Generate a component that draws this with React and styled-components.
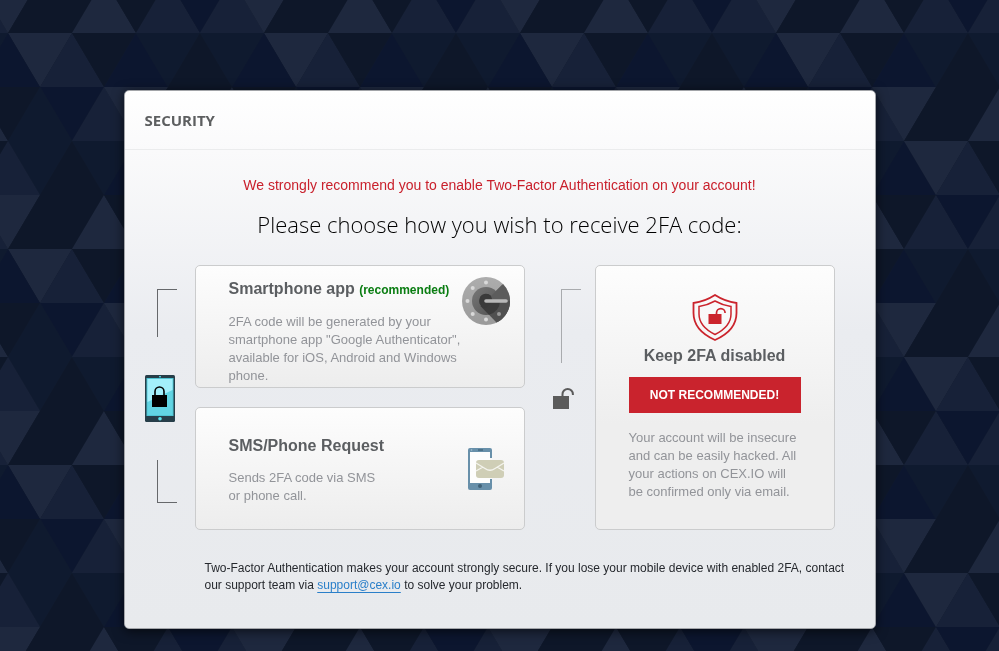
import React from "react";
import styled, { createGlobalStyle } from "styled-components";

const GlobalStyle = createGlobalStyle`
  * {
    box-sizing: border-box;
  }
  body {
    margin: 0;
    background: #0e182b;
    color: #26292e;
    font-family: "Liberation Sans", Arial, sans-serif;
  }
  h1, h2, p {
    margin: 0;
  }
`;

const light = "#1e283e";
const mid = "#172138";
const dark = "#0e1729";
const navy = "#0c162f";
const deep = "#0f1a2f";

// each row lists its triangles from left to right: down, up, down, up...
const triangleRows = [
  { offset: 0, colors: [light, mid, dark, navy, deep, dark, deep, navy] },
  { offset: 32, colors: [navy, mid, light, dark, dark, light, dark, deep] },
  { offset: 0, colors: [deep, dark, deep, navy, light, mid, dark, mid] },
  { offset: 32, colors: [dark, light, dark, mid, navy, mid, light, dark] },
];

const triangles = triangleRows.flatMap(({ offset, colors }, row) =>
  colors.flatMap((fill, i) => {
    const x = offset + i * 32;
    const top = row * 54;
    const bottom = top + 54;
    return [x, x - 256].map((left) => ({
      fill,
      points:
        i % 2 === 0
          ? `${left},${top} ${left + 64},${top} ${left + 32},${bottom}`
          : `${left},${bottom} ${left + 64},${bottom} ${left + 32},${top}`,
    }));
  })
);

const Backdrop = () => (
  <BackdropSvg aria-hidden="true">
    <defs>
      <pattern
        id="triangles"
        x="8"
        y="33"
        width="256"
        height="216"
        patternUnits="userSpaceOnUse"
      >
        <rect width="256" height="216" fill={dark} />
        {triangles.map((t, i) => (
          <polygon key={i} points={t.points} fill={t.fill} />
        ))}
      </pattern>
    </defs>
    <rect width="100%" height="100%" fill="url(#triangles)" />
  </BackdropSvg>
);

const AuthenticatorIcon = () => (
  <svg width="48" height="48" viewBox="0 0 48 48" aria-hidden="true">
    <defs>
      <linearGradient id="dial" x1="0" y1="0" x2="0" y2="1">
        <stop offset="0" stopColor="#adadad" />
        <stop offset="1" stopColor="#9a9a9a" />
      </linearGradient>
      <linearGradient id="ring" x1="0" y1="0" x2="1" y2="1">
        <stop offset="0" stopColor="#787878" />
        <stop offset="1" stopColor="#505050" />
      </linearGradient>
    </defs>
    <circle cx="24" cy="24" r="24" fill="url(#dial)" />
    <path d="M24 24 41 7A24 24 0 0 1 34.5 45.6Z" fill="#5c5c5c" />
    <circle cx="24" cy="24" r="14" fill="url(#ring)" />
    <path d="M24 24H48A24 24 0 0 1 34.5 45.6L18.5 29Z" fill="#505050" />
    <path d="M24 24H38A14 14 0 0 1 27 37.7L18.5 29Z" fill="#3c3c3c" />
    <path d="M29 19A7 7 0 1 0 24 31L31 24H24Z" fill="#3a3a3a" />
    <path d="M24 24 29 19 34 14 40 8 42 24Z" fill="#5c5c5c" />
    <path d="M29 19A7 7 0 0 0 18 20L24 25 31 25Z" fill="#3a3a3a" />
    <g fill="#d9d9d9">
      <circle cx="24" cy="5.5" r="2" />
      <circle cx="10.7" cy="11" r="2" />
      <circle cx="5.5" cy="24" r="2" />
      <circle cx="10.7" cy="37" r="2" />
      <circle cx="24" cy="42.5" r="2" />
      <circle cx="37" cy="37" r="2" fill="#999" />
    </g>
    <path d="M24 24H44" stroke="#b9b9b9" strokeWidth="3.6" strokeLinecap="round" />
  </svg>
);

const SmsIcon = () => (
  <svg width="36" height="42" viewBox="0 0 36 42" aria-hidden="true">
    <rect width="24" height="42" rx="2" fill="#6890aa" />
    <rect x="2" y="4" width="20" height="31" fill="#fdfdfd" />
    <rect x="10" y="1" width="5" height="2" fill="#4c728a" />
    <circle cx="3.5" cy="2" r="0.8" fill="#a9c5d6" />
    <circle cx="12" cy="38" r="2" fill="#3f6177" />
    <rect x="22" y="10" width="2" height="21" fill="#f8f8f8" />
    <rect x="8" y="12" width="28" height="18" rx="3" fill="#cfceb6" />
    <path
      d="M8 15 17 20.5Q22 24 27 20.5L36 15M8 23 15 19M36 23 29 19"
      fill="none"
      stroke="#f4f4ee"
      strokeWidth="1.3"
    />
  </svg>
);

const LockedPhoneIcon = () => (
  <svg width="30" height="47" viewBox="0 0 30 47" aria-hidden="true">
    <rect width="30" height="47" rx="1.5" fill="#263e49" />
    <rect x="1.5" y="3" width="27" height="38" fill="#4fc4d3" />
    <rect x="2.5" y="4" width="25" height="36" fill="#62d4e3" />
    <path d="M2.5 4H27.5V15L2.5 27Z" fill="#a3effb" />
    <rect x="14" y="1" width="2" height="1.4" fill="#4fc4d3" />
    <circle cx="15" cy="43.8" r="1.8" fill="#5be3ee" />
    <path
      d="M10 21V16.500a4.500 4.500 0 0 1 9 0V21"
      fill="none"
      stroke="#000"
      strokeWidth="1.6"
    />
    <rect x="7" y="20" width="15" height="12" fill="#000" />
  </svg>
);

const OpenLockIcon = () => (
  <svg width="21" height="21" viewBox="0 0 21 21" aria-hidden="true">
    <rect y="8" width="16" height="13" fill="#5b5b5b" />
    <path
      d="M9.5 9V6.2a5.200 5.200 0 0 1 10.400 0V7"
      fill="none"
      stroke="#5b5b5b"
      strokeWidth="2"
    />
  </svg>
);

const ShieldIcon = () => (
  <svg width="46" height="47" viewBox="0 0 46 47" aria-hidden="true">
    <g fill="none" stroke="#cb242d">
      <path
        d="M23 1Q33 7.500 44.500 9V19C44.500 31 36.500 40 23 46 9.500 40 1.500 31 1.500 19V9Q13 7.500 23 1Z"
        strokeWidth="1.8"
      />
      <path
        d="M23 7Q31 11.500 39 12.500V20C39 29 33 35.500 23 40.500 13 35.500 7 29 7 20V12.500Q15 11.500 23 7Z"
        strokeWidth="1.5"
      />
      <path d="M24.500 21V19a4.300 4.300 0 0 1 8.600 0" strokeWidth="1.7" />
    </g>
    <rect x="16.500" y="20" width="13" height="10" fill="#cb242d" />
  </svg>
);

const App = () => {
  return (
    <>
      <GlobalStyle />
      <Backdrop />
      <Page>
        <Panel>
          <PanelHeader>
            <PanelTitle>SECURITY</PanelTitle>
          </PanelHeader>
          <Warning>
            We strongly recommend you to enable Two-Factor Authentication on
            your account!
          </Warning>
          <Question>Please choose how you wish to receive 2FA code:</Question>
          <Choices>
            <Connector>
              <Bracket $height={48} />
              <LockedPhoneIcon />
              <Bracket $height={43} $bottom />
            </Connector>
            <Options>
              <Option type="button" $top={11}>
                <OptionText>
                  <OptionTitle>
                    Smartphone app <Hint>(recommended)</Hint>
                  </OptionTitle>
                  <OptionNote>
                    2FA code will be generated by your smartphone app "Google
                    Authenticator", available for iOS, Android and Windows
                    phone.
                  </OptionNote>
                </OptionText>
                <IconSlot>
                  <AuthenticatorIcon />
                </IconSlot>
              </Option>
              <Option type="button" $top={26}>
                <OptionText>
                  <OptionTitle>SMS/Phone Request</OptionTitle>
                  <OptionNote $narrow>
                    Sends 2FA code via SMS or phone call.
                  </OptionNote>
                </OptionText>
                <IconSlot $centered>
                  <SmsIcon />
                </IconSlot>
              </Option>
            </Options>
            <OpenConnector>
              <Bracket $height={74} $light />
              <OpenLockIcon />
            </OpenConnector>
            <DisabledCard>
              <ShieldIcon />
              <OptionTitle>Keep 2FA disabled</OptionTitle>
              <DangerButton type="button">NOT RECOMMENDED!</DangerButton>
              <OptionNote>
                Your account will be insecure and can be easily hacked. All your
                actions on CEX.IO will be confirmed only via email.
              </OptionNote>
            </DisabledCard>
          </Choices>
          <Footnote>
            Two-Factor Authentication makes your account strongly secure. If you
            lose your mobile device with enabled 2FA, contact our support team
            via <a href="mailto:support@cex.io">support@cex.io</a> to solve your
            problem.
          </Footnote>
        </Panel>
      </Page>
    </>
  );
};

const BackdropSvg = styled.svg`
  position: fixed;
  inset: 0;
  z-index: -1;
  width: 100%;
  height: 100%;
`;

const Page = styled.main`
  padding: 90px 16px 22px;
`;

const Panel = styled.section`
  max-width: 752px;
  margin: 0 auto;
  padding-bottom: 34px;
  border: 1px solid #a3a5a9;
  border-radius: 5px;
  background: linear-gradient(#fff 0, #fafafb 60px, #eaecf0 240px, #e8eaed 100%);
  box-shadow: 0 2px 12px rgba(0, 0, 0, 0.65);
`;

const PanelHeader = styled.header`
  padding: 17px 20px;
  border-bottom: 1px solid #ebeced;
`;

const PanelTitle = styled.h1`
  color: #5d5f60;
  font-family: "Open Sans", sans-serif;
  font-size: 15px;
  font-weight: 700;
  line-height: 24px;
`;

const Warning = styled.p`
  margin-top: 25px;
  color: #c9202c;
  font-size: 14px;
  line-height: 20px;
  text-align: center;
`;

const Question = styled.h2`
  margin-top: 13px;
  color: #000;
  font-family: "Open Sans", sans-serif;
  font-size: 22px;
  font-weight: 300;
  line-height: 32px;
  text-align: center;
`;

const Choices = styled.div`
  display: grid;
  grid-template-columns: 50px minmax(0, 330fr) 70px minmax(0, 240fr);
  margin: 25px 40px 0 20px;
`;

const Connector = styled.div`
  display: flex;
  flex-direction: column;
  justify-content: space-between;
  padding: 24px 0 27px;
`;

const OpenConnector = styled.div`
  display: flex;
  flex-direction: column;
  gap: 25px;
  padding: 24px 0 0 28px;
`;

const Bracket = styled.span`
  width: 20px;
  height: ${({ $height }) => $height}px;
  margin-left: ${({ $light }) => ($light ? 8 : 12)}px;
  border: 0 solid ${({ $light }) => ($light ? "#a9abae" : "#66686b")};
  border-left-width: 1px;
  ${({ $bottom }) => ($bottom ? "border-bottom-width" : "border-top-width")}: 1px;
`;

const Options = styled.div`
  display: grid;
  grid-template-rows: 1fr 1fr;
  gap: 19px;
`;

const Option = styled.button`
  display: flex;
  align-items: flex-start;
  min-height: 123px;
  padding: ${({ $top }) => $top}px 14px 0 33px;
  border: 1px solid #cbcccd;
  border-radius: 5px;
  background: linear-gradient(#fdfdfd, #ededed);
  font-family: inherit;
  text-align: left;
  cursor: pointer;
`;

const OptionText = styled.span`
  flex: 1;
  margin-right: -14px;
`;

const OptionTitle = styled.strong`
  display: block;
  color: #5b5e61;
  font-size: 16px;
  line-height: 24px;
`;

const Hint = styled.span`
  color: #0a7d12;
  font-size: 12px;
`;

const OptionNote = styled.span`
  display: block;
  max-width: ${({ $narrow }) => ($narrow ? "160px" : "none")};
  margin-top: 11px;
  color: #929499;
  font-size: 13px;
  line-height: 18px;
`;

const IconSlot = styled.span`
  display: flex;
  flex: none;
  justify-content: center;
  width: 48px;
  margin-top: ${({ $centered }) => ($centered ? 14 : 0)}px;
`;

const DisabledCard = styled.div`
  display: flex;
  flex-direction: column;
  align-items: center;
  padding: 28px 33px;
  border: 1px solid #cbcccd;
  border-radius: 5px;
  background: linear-gradient(#fdfdfd, #eee 60%);

  ${OptionTitle} {
    margin-top: 3px;
  }

  ${OptionNote} {
    margin-top: 16px;
  }
`;

const DangerButton = styled.button`
  width: 100%;
  height: 36px;
  margin-top: 9px;
  border: none;
  background: #c9232d;
  color: #fff;
  font-family: inherit;
  font-size: 12px;
  font-weight: 700;
  cursor: pointer;
`;

const Footnote = styled.p`
  margin: 30px 20px 0 80px;
  font-size: 12px;
  line-height: 17px;

  a {
    color: #2a7fc9;
    text-decoration: underline;
    text-decoration-skip-ink: none;
    text-underline-offset: 3px;
  }
`;

export default App;
